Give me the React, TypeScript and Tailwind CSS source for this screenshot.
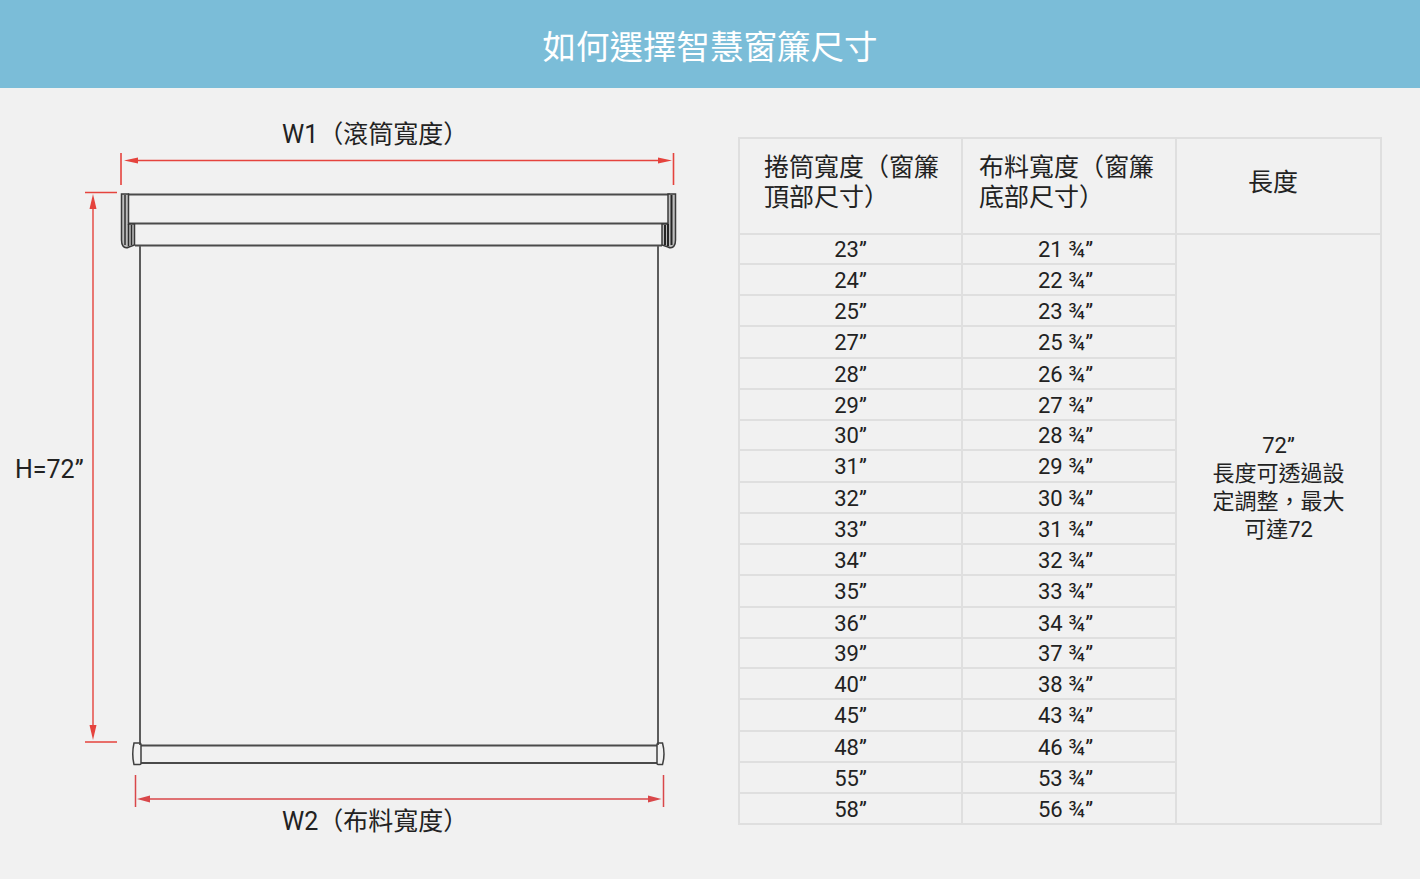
const rows = [
  ["23”", "21 ¾”", 30], ["24”", "22 ¾”", 31], ["25”", "23 ¾”", 31], ["27”", "25 ¾”", 32], ["28”", "26 ¾”", 31],
  ["29”", "27 ¾”", 31], ["30”", "28 ¾”", 30], ["31”", "29 ¾”", 32], ["32”", "30 ¾”", 31], ["33”", "31 ¾”", 31],
  ["34”", "32 ¾”", 31], ["35”", "33 ¾”", 32], ["36”", "34 ¾”", 31], ["39”", "37 ¾”", 30], ["40”", "38 ¾”", 31],
  ["45”", "43 ¾”", 32], ["48”", "46 ¾”", 31], ["55”", "53 ¾”", 31], ["58”", "56 ¾”", 31],
] as const;

const fontStack = "font-['Roboto','Noto_Sans_CJK_TC',sans-serif]";

function BlindDiagram() {
  const red = "#e5433d";
  const redLow = "#d9474a";
  const line = "#4a4a4a";
  return (
    <svg width="738" height="791" viewBox="0 88 738 791" fill="none">
      {/* W1 */}
      <path d="M121 153V185M673.500 153V185M132 160.500H664" stroke={red} strokeWidth="1.600" />
      <path d="M124 160.500L138 157.500V163.500Z" fill={red} />
      <path d="M672 160.500L658 157.500V163.500Z" fill={red} />
      {/* H */}
      <path d="M85 192.500H117M85 742H117M93 204V732" stroke={red} strokeWidth="1.400" />
      <path d="M93 194L89.500 209H96.500Z" fill={red} />
      <path d="M93 740L89.500 725H96.500Z" fill={red} />
      {/* W2 */}
      <path d="M135.500 775V807M663.500 775V807M148 799H652" stroke={redLow} strokeWidth="1.500" />
      <path d="M137 799L150 795.500V802.500Z" fill={redLow} />
      <path d="M661.500 799L648 795.500V802.500Z" fill={redLow} />
      {/* headrail */}
      <path d="M128 194.500H670M128 223.500H668M135 245.500H662" stroke={line} strokeWidth="2" />
      {/* left bracket */}
      <path d="M121.500 194H128.500V224H134.500V245L129 247Q125 249 123 246Q121.500 244 121.500 240Z" fill="#bdbdbd" stroke="#3a3a3a" strokeWidth="1.500" />
      <path d="M125 195V245M128.500 224V246M131.500 225V245" stroke="#2e2e2e" strokeWidth="1.500" />
      {/* right bracket */}
      <path d="M675.500 194H668V224H662V245L668 247Q672 249 674 246Q675.500 244 675.500 240Z" fill="#bdbdbd" stroke="#3a3a3a" strokeWidth="1.500" />
      <path d="M671.500 195V245M668 224V246M665 225V245" stroke="#262626" strokeWidth="2" />
      {/* fabric */}
      <path d="M140 246V745M658 246V745" stroke="#5c5c5c" strokeWidth="2" />
      {/* bottom bar */}
      <path d="M141 745.500H657M141 763H657" stroke={line} strokeWidth="2" />
      <path d="M140 743H134Q131.500 754 134 764.500H140Q141 764.500 141 763V745Q141 743 140 743Z" stroke="#3f3f3f" strokeWidth="1.500" />
      <path d="M658 743H662.500Q665.500 754 662.500 764.500H658Q657 764.500 657 763V745Q657 743 658 743Z" stroke="#3f3f3f" strokeWidth="1.500" />
    </svg>
  );
}

export default function App() {
  return (
    <div className={`min-h-[879px] bg-[#f1f1f1] text-[#222] ${fontStack}`}>
      <header className="flex h-[88px] items-center justify-center pt-[8px] bg-[#7bbdd8] text-[33.500px] text-white">
        如何選擇智慧窗簾尺寸
      </header>

      <div className="flex">
        {/* diagram */}
        <div className="relative h-[791px] w-[738px] shrink-0">
          <BlindDiagram />
          <span className="absolute left-[282px] top-[31px] text-[25px] leading-[32px]">W1（滾筒寬度）</span>
          <span className="absolute left-[15px] top-[366px] text-[25px] leading-[32px]">H=72”</span>
          <span className="absolute left-[282px] top-[718px] text-[25px] leading-[32px]">W2（布料寬度）</span>
        </div>

        {/* size table */}
        <div className="pt-[49px]">
          <table className="w-[642px] table-fixed border-collapse border-2 border-[#dfdfdf] text-[22px]">
            <colgroup>
              <col className="w-[223px]" />
              <col className="w-[214px]" />
              <col className="w-[205px]" />
            </colgroup>
            <thead>
              <tr className="h-[96px]">
                <th className="border-2 border-[#dfdfdf] pb-[7px] pl-[24px] pr-[20px] text-left text-[25px] font-normal leading-[30px]">
                  捲筒寬度（窗簾頂部尺寸）
                </th>
                <th className="border-2 border-[#dfdfdf] pb-[7px] pl-[16px] pr-[20px] text-left text-[25px] font-normal leading-[30px]">
                  布料寬度（窗簾底部尺寸）
                </th>
                <th className="border-2 border-[#dfdfdf] pb-[7px] pr-[11px] text-center text-[25px] font-normal leading-[30px]">
                  長度
                </th>
              </tr>
            </thead>
            <tbody>
              {rows.map(([top, bottom, height], i) => (
                <tr key={top} style={{ height }}>
                  <td className="border-2 border-[#dfdfdf] p-0 pt-[2px] text-center leading-[26px]">{top}</td>
                  <td className="border-2 border-[#dfdfdf] p-0 pl-[1px] pr-[8px] pt-[2px] text-center leading-[26px]">{bottom}</td>
                  {i === 0 && (
                    <td rowSpan={rows.length} className="border-2 border-[#dfdfdf] px-[35px] pb-[82px] text-center leading-[28px]">
                      72”
                      <br />
                      長度可透過設定調整，最大可達72
                    </td>
                  )}
                </tr>
              ))}
            </tbody>
          </table>
        </div>
      </div>
    </div>
  );
}
